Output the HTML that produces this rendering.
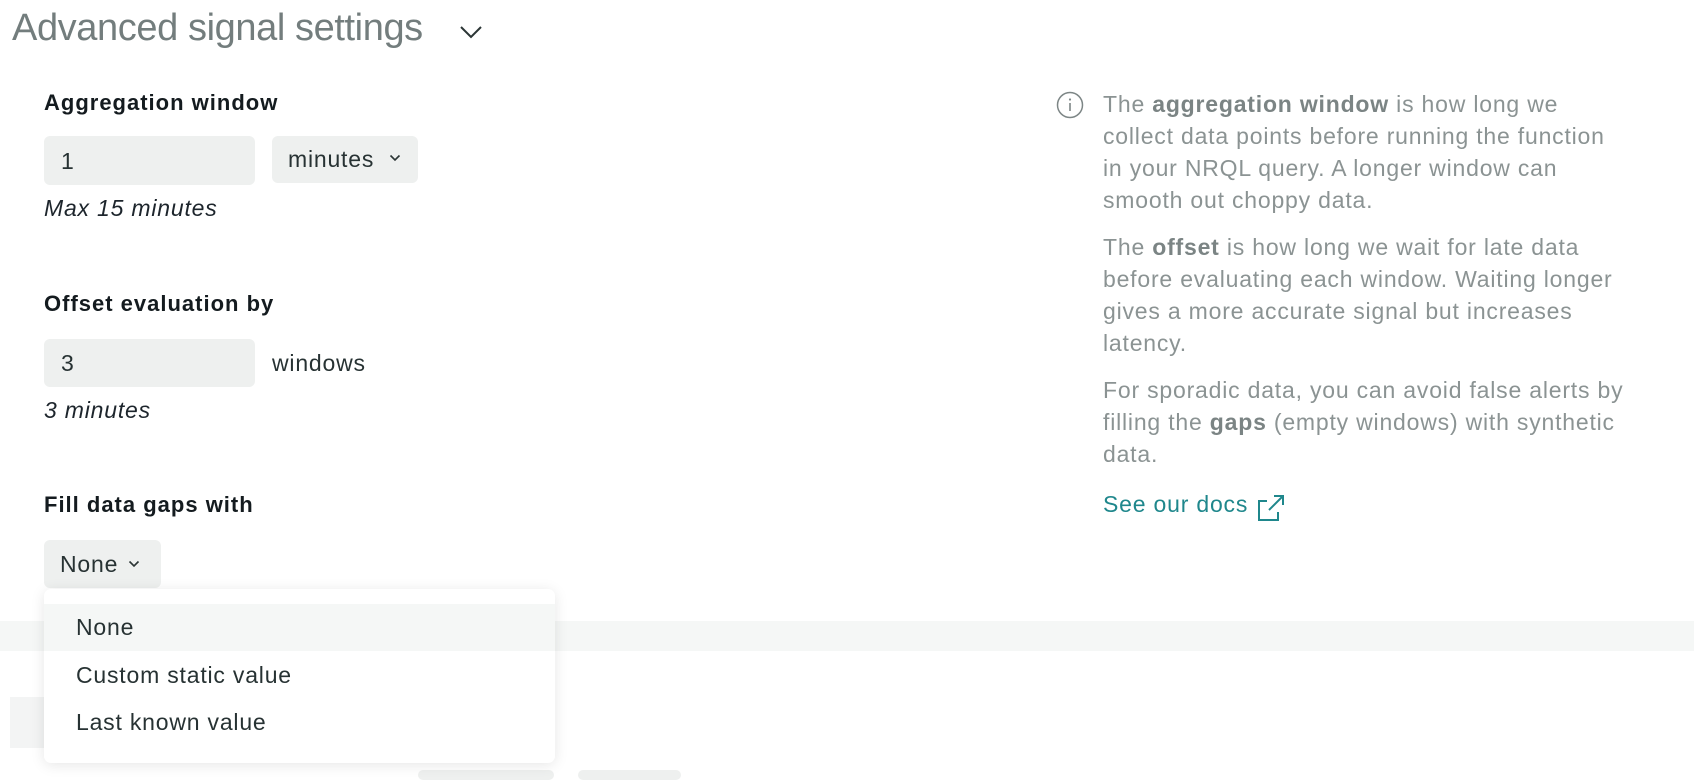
<!DOCTYPE html>
<html><head><meta charset="utf-8"><style>
*{margin:0;padding:0;box-sizing:border-box}
body{width:1694px;height:774px;background:#fff;position:relative;overflow:hidden;font-family:"Liberation Sans",sans-serif;color:#1d252c}
.a{position:absolute;white-space:nowrap}
.h{left:12px;top:7px;font-size:38px;color:#737d7d;letter-spacing:-0.4px}
.lbl{font-size:22px;font-weight:bold;color:#141b1f;letter-spacing:1px}
.box{position:absolute;background:#eef0ef;border-radius:6px}
.t{font-size:23px;color:#273233;letter-spacing:0.8px}
.it{font-size:23px;font-style:italic;color:#1d252c;letter-spacing:0.8px}
.p{left:1103px;font-size:23px;color:#8b9393;line-height:32px;letter-spacing:0.8px}
.p b{color:#7b8484}
</style></head><body>
<div class="a h">Advanced signal settings</div>
<svg class="a" style="left:459px;top:24px" width="24" height="16" viewBox="0 0 24 16"><path d="M2 3 L12 13 L22 3" fill="none" stroke="#2b3535" stroke-width="2"/></svg>

<div class="a lbl" style="left:44px;top:90px">Aggregation window</div>
<div class="box" style="left:44px;top:136px;width:211px;height:49px"></div>
<div class="a t" style="left:61px;top:148px">1</div>
<div class="box" style="left:272px;top:136px;width:146px;height:47px"></div>
<div class="a t" style="left:288px;top:146px">minutes</div>
<svg class="a" style="left:389px;top:154px" width="12" height="8" viewBox="0 0 12 8"><path d="M1.5 1.5 L6 6 L10.5 1.5" fill="none" stroke="#2b3535" stroke-width="1.6"/></svg>
<div class="a it" style="left:44px;top:195px">Max 15 minutes</div>

<div class="a lbl" style="left:44px;top:291px">Offset evaluation by</div>
<div class="box" style="left:44px;top:339px;width:211px;height:48px"></div>
<div class="a t" style="left:61px;top:350px">3</div>
<div class="a t" style="left:272px;top:350px">windows</div>
<div class="a it" style="left:44px;top:397px">3 minutes</div>

<div class="a lbl" style="left:44px;top:492px">Fill data gaps with</div>
<div class="box" style="left:44px;top:540px;width:117px;height:48px"></div>
<div class="a t" style="left:60px;top:551px">None</div>
<svg class="a" style="left:128px;top:560px" width="12" height="8" viewBox="0 0 12 8"><path d="M1.5 1.5 L6 6 L10.5 1.5" fill="none" stroke="#2b3535" stroke-width="1.6"/></svg>

<div class="a" style="left:0;top:621px;width:1694px;height:30px;background:#f5f7f6"></div>
<div class="box" style="left:10px;top:697px;width:34px;height:51px;background:#f3f4f4;border-radius:0"></div>
<div class="box" style="left:418px;top:770px;width:136px;height:10px"></div>
<div class="box" style="left:578px;top:770px;width:103px;height:10px"></div>

<div class="a" style="left:44px;top:589px;width:511px;height:174px;background:#fff;border-radius:7px;box-shadow:0 2px 14px rgba(0,0,0,0.10)"></div>
<div class="a" style="left:44px;top:604px;width:511px;height:47px;background:#f5f7f6"></div>
<div class="a t" style="left:76px;top:614px">None</div>
<div class="a t" style="left:76px;top:662px">Custom static value</div>
<div class="a t" style="left:76px;top:709px">Last known value</div>

<svg class="a" style="left:1056px;top:91px" width="28" height="28" viewBox="0 0 28 28"><circle cx="14" cy="14" r="12.5" fill="none" stroke="#7d8686" stroke-width="1.5"/><path d="M14 12 V20" stroke="#7d8686" stroke-width="1.6"/><circle cx="14" cy="8.5" r="1.1" fill="#7d8686"/></svg>
<div class="a p" style="top:88px">The <b>aggregation window</b> is how long we<br>collect data points before running the function<br>in your NRQL query. A longer window can<br>smooth out choppy data.</div>
<div class="a p" style="top:231px">The <b>offset</b> is how long we wait for late data<br>before evaluating each window. Waiting longer<br>gives a more accurate signal but increases<br>latency.</div>
<div class="a p" style="top:374px">For sporadic data, you can avoid false alerts by<br>filling the <b>gaps</b> (empty windows) with synthetic<br>data.</div>
<div class="a" style="left:1103px;top:491px;font-size:23px;color:#1f878c;letter-spacing:0.8px">See our docs</div>
<svg class="a" style="left:1256px;top:493px" width="30" height="30" viewBox="0 0 30 30"><path d="M11 8 H3 V27 H22 V19" fill="none" stroke="#1f878c" stroke-width="2"/><path d="M13 17 L27 3 M18 3 H27 V12" fill="none" stroke="#1f878c" stroke-width="2"/></svg>
</body></html>
